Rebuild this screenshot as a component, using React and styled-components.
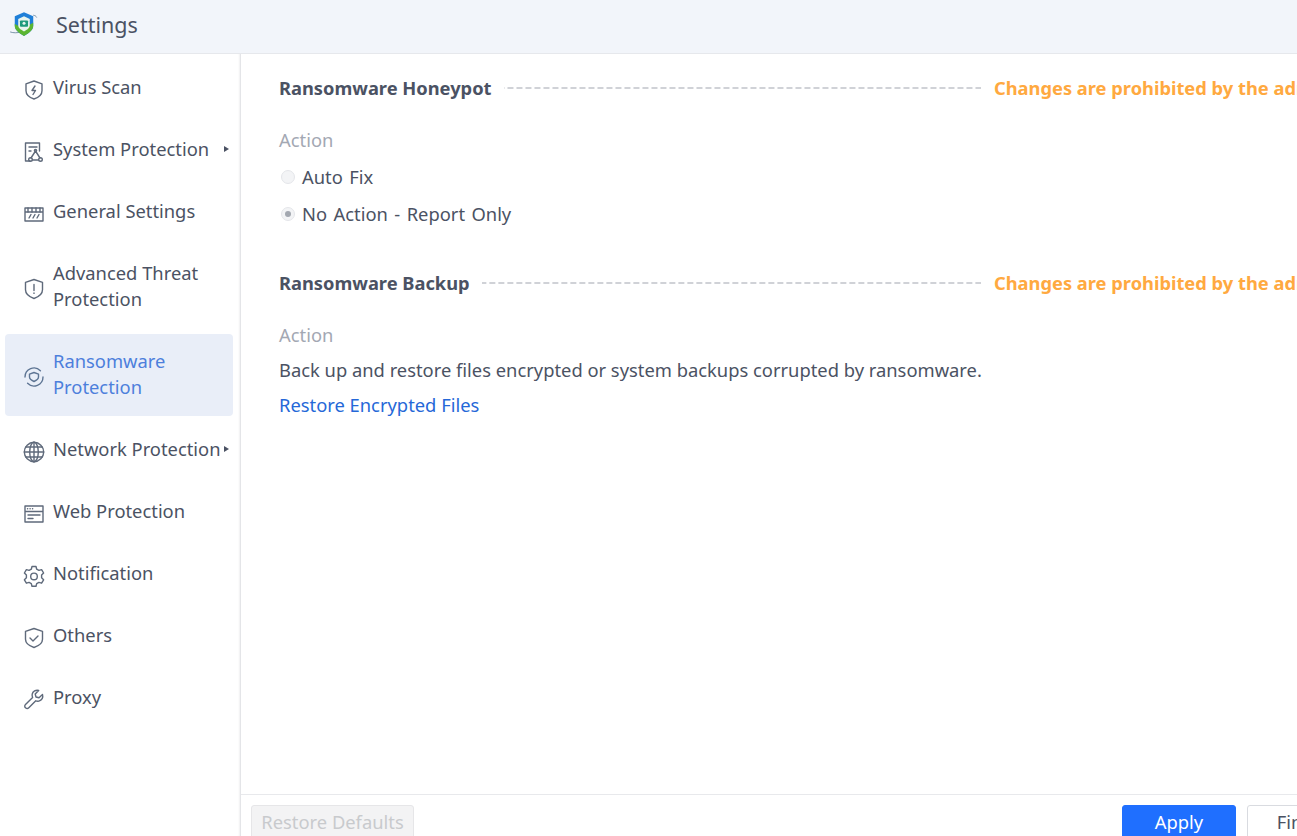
import React from "react";
import styled, { createGlobalStyle } from "styled-components";

const GlobalStyle = createGlobalStyle`
  html, body {
    margin: 0;
    padding: 0;
    background: #fff;
    overflow: hidden;
  }
  * {
    box-sizing: border-box;
  }
`;

const Page = styled.div`
  width: 1297px;
  height: 836px;
  display: flex;
  flex-direction: column;
  overflow: hidden;
  font-family: "Noto Sans", "Noto Sans CJK SC", sans-serif;
  font-size: 18.35px;
  line-height: 26px;
  color: #4b5263;
`;

const TitleBar = styled.header`
  height: 54px;
  flex-shrink: 0;
  display: flex;
  align-items: center;
  gap: 17px;
  padding: 0 0 3px 9px;
  background: #f2f5fa;
  border-bottom: 1px solid #e6e8ec;
  font-size: 21.5px;
`;

const Body = styled.div`
  flex: 1;
  min-height: 0;
  display: flex;
`;

const Sidebar = styled.nav`
  width: 241px;
  flex-shrink: 0;
  padding: 2px 7px 0 5px;
  border-right: 1px solid #e4e5e8;
  box-shadow: inset -2px 0 2px -1px #f1f1f2;
`;

const NavItem = styled.div`
  height: ${(p) => (p.$tall ? 88 : 62)}px;
  display: flex;
  align-items: center;
  gap: 8px;
  padding: 0 4px 0 18px;
  color: ${(p) => (p.$active ? "#4d7fdc" : "#4b5263")};
  ${(p) =>
    p.$active &&
    `
    height: 82px;
    margin: 4px 0 2px;
    padding-bottom: 2px;
    background: #e9eef8;
    border-radius: 4px;
  `}
`;

const NavIcon = styled.svg`
  width: 22px;
  height: 22px;
  flex-shrink: 0;
  margin-top: 6px;
  fill: none;
  stroke: ${(p) => (p.$active ? "#5e7594" : "#5f6a7b")};
  stroke-width: 1.4;
  stroke-linecap: round;
  stroke-linejoin: round;
`;

const NavLabel = styled.span`
  white-space: nowrap;
  margin-right: -5px;
`;

const Caret = styled.span`
  margin-left: auto;
  width: 0;
  height: 0;
  border-left: 5px solid #4b5263;
  border-top: 3.5px solid transparent;
  border-bottom: 3.5px solid transparent;
`;

const Main = styled.main`
  flex: 1;
  min-width: 0;
  display: flex;
  flex-direction: column;
`;

const Content = styled.div`
  flex: 1;
  min-height: 0;
  padding: 21px 0 0 38px;
`;

const SectionHead = styled.div`
  width: 1115px;
  display: flex;
  align-items: center;
  margin-top: ${(p) => p.$top || 0}px;
`;

const SectionTitle = styled.h3`
  margin: 0;
  font-size: 18.3px;
  line-height: 26px;
  font-weight: 700;
  white-space: nowrap;
`;

const DashLine = styled.span`
  flex: 1;
  height: 2px;
  margin: 0 13px 0 12px;
  background-image: linear-gradient(90deg, transparent 3px, #d0d2d7 3px);
  background-size: 9px 2px;
  background-repeat: repeat-x;
  background-position: right center;
`;

const Locked = styled.span`
  width: 400px;
  flex-shrink: 0;
  font-weight: 700;
  font-size: 18.3px;
  white-space: nowrap;
  color: #ffa940;
`;

const FieldLabel = styled.div`
  margin-top: 26px;
  color: #a3a8b3;
`;

const RadioRow = styled.div`
  display: flex;
  align-items: center;
  gap: 7px;
  margin-top: ${(p) => p.$top}px;
  padding-left: 2px;
  word-spacing: 1.7px;
`;

const RadioDot = styled.span`
  width: 14px;
  height: 14px;
  display: flex;
  align-items: center;
  justify-content: center;
  border: 1px solid #e4e6ea;
  border-radius: 50%;
  background: #f3f4f6;

  &::after {
    content: "";
    width: 6px;
    height: 6px;
    border-radius: 50%;
    background: ${(p) => (p.$checked ? "#a3a8b0" : "transparent")};
  }
`;

const Paragraph = styled.p`
  margin: 9px 0 0;
`;

const TextLink = styled.a`
  display: block;
  margin-top: 9px;
  color: #2568d8;
  cursor: pointer;
`;

const Footer = styled.footer`
  height: 42px;
  flex-shrink: 0;
  display: flex;
  align-items: flex-start;
  gap: 11px;
  padding: 10px 0 0 10px;
  border-top: 1px solid #e8e9ec;
  overflow: hidden;
`;

const Button = styled.button`
  width: ${(p) => p.$width}px;
  height: 34px;
  flex-shrink: 0;
  padding: 0;
  font: inherit;
  border-radius: 3px;
  border: 1px solid #d9dbe0;
  background: #fff;
  color: #4b5263;
`;

const GhostButton = styled(Button)`
  margin-right: auto;
  background: #f3f3f4;
  border-color: #e6e6e8;
  color: #c8cacd;
`;

const PrimaryButton = styled(Button)`
  background: #1f6fff;
  border-color: #1f6fff;
  color: #fff;
`;

const FinishButton = styled(Button)`
  margin-right: -60px;
`;

const Logo = () => (
  <svg width="30" height="30" viewBox="2 1 26 26" fill="none">
    <path d="M3 20c3 1 6 1 9 0M23 5.500c1.500 .2 2.500 .8 3 2" stroke="#5e7d95" strokeWidth="0.7" />
    <path d="M15 3l8 3.500v8c0 4-3.500 6.500-8 9-4.500-2.500-8-5-8-9v-8z" fill="#1f7fd8" />
    <path d="M7 13c3 3 10 3 16-1v2.500c0 4-3.500 6.500-8 9-4.500-2.500-8-5-8-9z" fill="#5cb531" />
    <path d="M15 6.500l5 2.200v5.500c0 2.400-2.200 3.800-5 5.400-2.800-1.600-5-3-5-5.400V8.700z" fill="#e8f4ee" />
    <rect x="11.500" y="10" width="7" height="5.500" rx="0.8" fill="#1e9a7b" />
    <circle cx="15" cy="12.500" r="1.300" fill="#e8f4ee" />
  </svg>
);

const icons = {
  scan: (
    <>
      <path d="M11 2l8 2.800v7c0 4-3.400 6.700-8 8.200-4.600-1.500-8-4.200-8-8.200v-7z" />
      <path d="M12 7l-3 4.500h3.500L10 15.500" />
    </>
  ),
  system: (
    <>
      <path d="M7 20H2.500V2h14v8" />
      <path d="M6 6h8M6 10h2" />
      <path d="M12.500 10l-4.500 7M12.500 10l4.500 7M9.500 19h6" />
      <circle cx="12.500" cy="9.500" r="1.100" />
      <circle cx="7.500" cy="18.500" r="1.800" />
      <circle cx="17.500" cy="18.500" r="1.800" />
    </>
  ),
  general: (
    <>
      <path d="M2 5h18v13H2zM2 9h18" />
      <path d="M5 5v4M9 5v4M13 5v4M17 5v4" />
      <path d="M6 15l2-3.500M10 15l2-3.500M14 15l2-3.500" />
    </>
  ),
  threat: (
    <>
      <path d="M11 1.500l8.500 2.800v7.500c0 4-3.600 7-8.500 8.700-4.900-1.700-8.500-4.700-8.500-8.700V4.300z" />
      <path d="M11 6.500v6M11 15v.4" />
    </>
  ),
  ransom: (
    <>
      <path d="M11 6.500l4.500 1.600v3c0 2-2 3.300-4.500 4.400-2.500-1.100-4.500-2.400-4.500-4.400v-3z" />
      <path d="M2 11A9 9 0 0 1 17.400 4.700M20 11A9 9 0 0 1 4.600 17.300" />
    </>
  ),
  network: (
    <>
      <circle cx="11" cy="11" r="9.700" />
      <ellipse cx="11" cy="11" rx="4.300" ry="9.700" />
      <path d="M11 1.300v19.400M1.300 11h19.400M2.700 6h16.600M2.700 16h16.600" />
    </>
  ),
  web: (
    <>
      <path d="M2 3h18v16H2zM2 8.500h18" />
      <path d="M4.500 5.800h.2M7 5.800h.2M9.500 5.800h.2M5 12h12M5 15.500h5" />
    </>
  ),
  gear: (
    <>
      <path d="M9 1.500h4l.7 2.700 2.200 1.200 2.700-.8 2 3.400-2 2v2.800l2 2-2 3.400-2.700-.8-2.200 1.200-.7 2.700H9l-.7-2.700-2.200-1.200-2.700.8-2-3.400 2-2V10l-2-2 2-3.400 2.700.8 2.200-1.200z" />
      <circle cx="11" cy="11.400" r="3.300" />
    </>
  ),
  others: (
    <>
      <path d="M11 1.500l8.500 2.800v8c0 4-3.600 6.600-8.500 8.200-4.900-1.600-8.500-4.200-8.500-8.200v-8z" />
      <path d="M7 11l3 3 5-5" />
    </>
  ),
  proxy: (
    <>
      <path d="M19.500 5.500l-3.500 3.300-3-.8-.8-3L15.700 1.500c-2.800-.8-6 .8-6.500 3.700-.2 1.200 0 2.200.4 3.200L2.500 15.500c-1 1-1 2.400 0 3.300s2.300 1 3.300 0l7-7c1 .4 2 .5 3.100.3 3-.6 4.500-3.700 3.600-6.600z" />
    </>
  ),
};

const navItems = [
  { key: "scan", label: "Virus Scan" },
  { key: "system", label: "System Protection", caret: true },
  { key: "general", label: "General Settings" },
  { key: "threat", label: <>Advanced Threat<br />Protection</>, tall: true },
  { key: "ransom", label: <>Ransomware<br />Protection</>, active: true },
  { key: "network", label: "Network Protection", caret: true },
  { key: "web", label: "Web Protection" },
  { key: "gear", label: "Notification" },
  { key: "others", label: "Others" },
  { key: "proxy", label: "Proxy" },
];

const LOCKED_TEXT = "Changes are prohibited by the administrator";

const App = () => {
  return (
    <Page>
      <GlobalStyle />
      <TitleBar>
        <Logo />
        <span>Settings</span>
      </TitleBar>
      <Body>
        <Sidebar>
          {navItems.map((item) => (
            <NavItem key={item.key} $tall={item.tall} $active={item.active}>
              <NavIcon viewBox="0 0 22 22" $active={item.active}>
                {icons[item.key]}
              </NavIcon>
              <NavLabel>{item.label}</NavLabel>
              {item.caret && <Caret />}
            </NavItem>
          ))}
        </Sidebar>
        <Main>
          <Content>
            <SectionHead>
              <SectionTitle>Ransomware Honeypot</SectionTitle>
              <DashLine />
              <Locked>{LOCKED_TEXT}</Locked>
            </SectionHead>
            <FieldLabel>Action</FieldLabel>
            <RadioRow $top={11}>
              <RadioDot />
              Auto Fix
            </RadioRow>
            <RadioRow $top={11}>
              <RadioDot $checked />
              No Action - Report Only
            </RadioRow>
            <SectionHead $top={43}>
              <SectionTitle>Ransomware Backup</SectionTitle>
              <DashLine />
              <Locked>{LOCKED_TEXT}</Locked>
            </SectionHead>
            <FieldLabel>Action</FieldLabel>
            <Paragraph>
              Back up and restore files encrypted or system backups corrupted by ransomware.
            </Paragraph>
            <TextLink>Restore Encrypted Files</TextLink>
          </Content>
          <Footer>
            <GhostButton $width={163}>Restore Defaults</GhostButton>
            <PrimaryButton $width={114}>Apply</PrimaryButton>
            <FinishButton $width={110}>Finish</FinishButton>
          </Footer>
        </Main>
      </Body>
    </Page>
  );
};

export default App;
